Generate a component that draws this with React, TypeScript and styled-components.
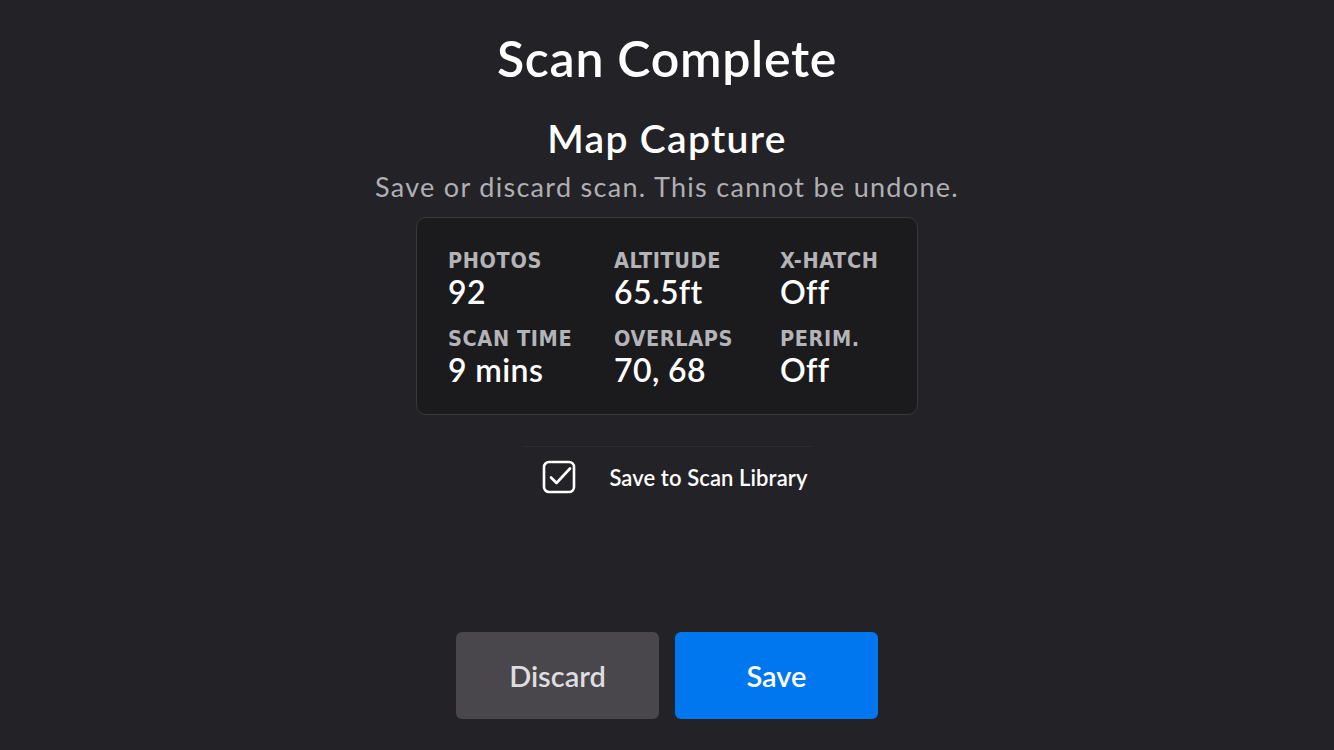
import React from "react";
import styled, { createGlobalStyle } from "styled-components";

const GlobalStyle = createGlobalStyle`
  html, body {
    margin: 0;
    padding: 0;
    background: #232226;
  }
  body {
    font-family: "Lato", "Open Sans", sans-serif;
    color: #ffffff;
  }
`;

const stats = [
  { label: "PHOTOS", value: "92" },
  { label: "ALTITUDE", value: "65.5ft" },
  { label: "X-HATCH", value: "Off" },
  { label: "SCAN TIME", value: "9 mins" },
  { label: "OVERLAPS", value: "70, 68" },
  { label: "PERIM.", value: "Off" },
];

export default function App() {
  return (
    <>
      <GlobalStyle />
      <Page>
        <Title>Scan Complete</Title>
        <Subtitle>Map Capture</Subtitle>
        <Hint>Save or discard scan. This cannot be undone.</Hint>
        <Card>
          {stats.map((s) => (
            <Stat key={s.label}>
              <Label>{s.label}</Label>
              <Value>{s.value}</Value>
            </Stat>
          ))}
        </Card>
        <Divider />
        <CheckRow>
          <CheckIcon width="34" height="34" viewBox="0 0 34 34">
            <rect x="2" y="2" width="30" height="30" rx="5" fill="none" stroke="#fff" strokeWidth="2.6" />
            <path d="M9 17.5l5.5 5.5L28 8.5" fill="none" stroke="#fff" strokeWidth="2.6" strokeLinecap="round" strokeLinejoin="round" />
          </CheckIcon>
          <CheckLabel>Save to Scan Library</CheckLabel>
        </CheckRow>
        <Actions>
          <Button variant="secondary">Discard</Button>
          <Button variant="primary">Save</Button>
        </Actions>
      </Page>
    </>
  );
}

const Page = styled.div`
  width: 1334px;
  height: 750px;
  display: flex;
  flex-direction: column;
  align-items: center;
  box-sizing: border-box;
  padding-top: 28px;
`;

const Title = styled.h1`
  margin: 0;
  font-size: 50px;
  line-height: 60px;
  font-weight: 600;
  letter-spacing: 0.7px;
`;

const Subtitle = styled.h2`
  margin: 28px 0 0;
  font-size: 39px;
  line-height: 44px;
  font-weight: 600;
  letter-spacing: 1.3px;
`;

const Hint = styled.p`
  margin: 11px 0 0;
  font-size: 27px;
  line-height: 32px;
  letter-spacing: 1.3px;
  color: #b0afb3;
`;

const Card = styled.div`
  margin-top: 14px;
  width: 502px;
  height: 198px;
  box-sizing: border-box;
  padding: 30px 0 0 31px;
  background: #1b1a1d;
  border: 1.5px solid #38373b;
  border-radius: 10px;
  display: grid;
  grid-template-columns: 166px 166px 140px;
  grid-auto-rows: 78px;
`;

const Stat = styled.div`
  display: flex;
  flex-direction: column;
`;

const Label = styled.span`
  font-family: "DejaVu Sans Condensed", "DejaVu Sans", sans-serif;
  font-weight: 700;
  font-size: 21.5px;
  line-height: 26px;
  letter-spacing: 0.6px;
  color: #b4b3b7;
`;

const Value = styled.span`
  font-size: 32px;
  line-height: 36px;
  font-weight: 600;
  letter-spacing: 0.4px;
  color: #ffffff;
`;

const Divider = styled.div`
  margin-top: 31px;
  width: 290px;
  height: 1px;
  background: #2c2b2f;
`;

const CheckRow = styled.div`
  margin-top: 13px;
  margin-left: 16px;
  display: flex;
  align-items: center;
  gap: 33px;
`;

const CheckIcon = styled.svg`
  display: block;
`;

const CheckLabel = styled.span`
  font-size: 22px;
  font-weight: 600;
  letter-spacing: 0.1px;
  color: #ffffff;
`;

const Actions = styled.div`
  margin-top: auto;
  margin-bottom: 31px;
  display: flex;
  gap: 16px;
`;

const Button = styled.button<{ variant: "primary" | "secondary" }>`
  width: 203px;
  height: 87px;
  border: none;
  border-radius: 6px;
  font-family: "Lato", "Open Sans", sans-serif;
  font-size: 29px;
  font-weight: 600;
  background: ${(p) => (p.variant === "primary" ? "#0077ee" : "#49474b")};
  color: ${(p) => (p.variant === "primary" ? "#ffffff" : "#dedde0")};
`;
